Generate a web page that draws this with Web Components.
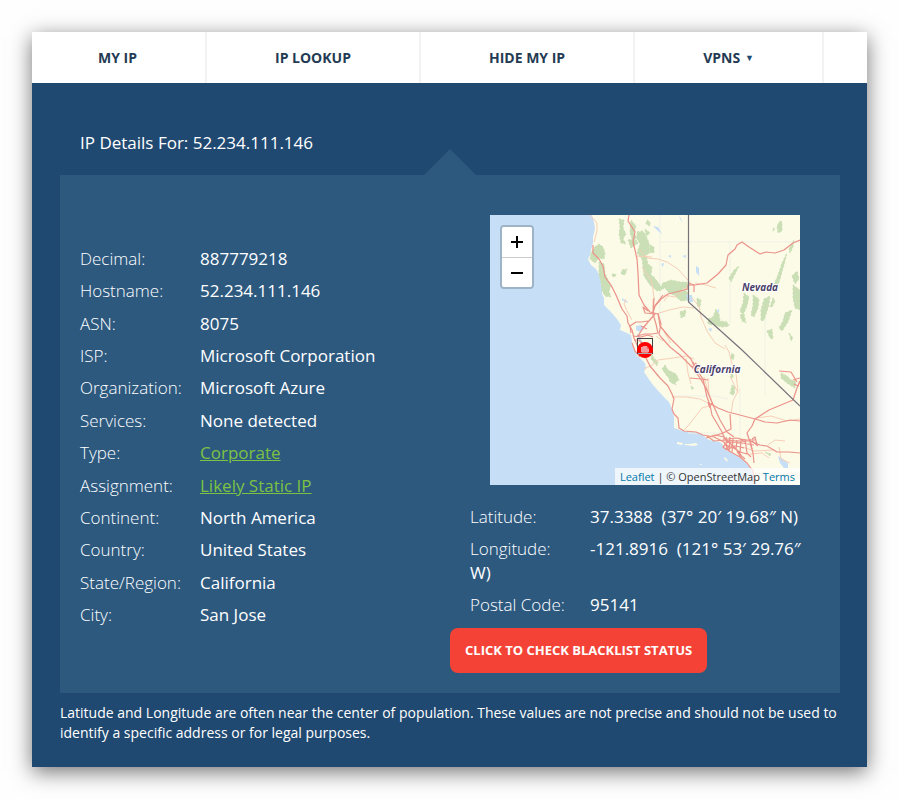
<!DOCTYPE html>
<html lang="en">
<head>
<meta charset="utf-8">
<title>IP Details For: 52.234.111.146</title>
<style>
  body { margin: 0; padding: 32px; background: #fefefe; font-family: "Open Sans", "Noto Sans", sans-serif; }
  a { color: #7cc243; }
</style>
</head>
<body>
<page-card>
  <nav-bar slot="nav">
    <nav-item href="#my-ip">MY IP</nav-item>
    <nav-item href="#lookup">IP LOOKUP</nav-item>
    <nav-item href="#hide">HIDE MY IP</nav-item>
    <nav-item href="#vpns" menu>VPNS</nav-item>
  </nav-bar>
  <ip-panel heading="IP Details For: 52.234.111.146">
    <detail-list slot="details">
      <detail-row label="Decimal:">887779218</detail-row>
      <detail-row label="Hostname:">52.234.111.146</detail-row>
      <detail-row label="ASN:">8075</detail-row>
      <detail-row label="ISP:">Microsoft Corporation</detail-row>
      <detail-row label="Organization:">Microsoft Azure</detail-row>
      <detail-row label="Services:">None detected</detail-row>
      <detail-row label="Type:"><a href="#corporate">Corporate</a></detail-row>
      <detail-row label="Assignment:"><a href="#static">Likely Static IP</a></detail-row>
      <detail-row label="Continent:">North America</detail-row>
      <detail-row label="Country:">United States</detail-row>
      <detail-row label="State/Region:">California</detail-row>
      <detail-row label="City:">San Jose</detail-row>
    </detail-list>
    <geo-map slot="location"></geo-map>
    <detail-list slot="location">
      <detail-row label="Latitude:">37.3388 &nbsp;(37° 20′ 19.68″ N)</detail-row>
      <detail-row label="Longitude:">-121.8916 &nbsp;(121° 53′ 29.76″ W)</detail-row>
      <detail-row label="Postal Code:">95141</detail-row>
    </detail-list>
    <action-button slot="location">CLICK TO CHECK BLACKLIST STATUS</action-button>
  </ip-panel>
  <foot-note>Latitude and Longitude are often near the center of population. These values are not precise and should not be used to identify a specific address or for legal purposes.</foot-note>
</page-card>

<script>
const define = (name, html, setup) => {
  const template = document.createElement('template');
  template.innerHTML = html;
  customElements.define(name, class extends HTMLElement {
    constructor() {
      super();
      this.attachShadow({ mode: 'open' }).append(template.content.cloneNode(true));
    }
    connectedCallback() { if (setup) setup(this, this.shadowRoot); }
  });
};

define('page-card', `
  <style>
    :host { display: block; background: #1f4971; color: #fff; box-shadow: 0 5px 20px rgba(0,0,0,.55); }
    main { padding: 0 27px 24px 28px; }
  </style>
  <slot name="nav"></slot>
  <main><slot></slot></main>`);

define('nav-bar', `
  <style>
    :host { display: block; background: #fff; overflow: hidden; }
    nav { display: flex; }
  </style>
  <nav><slot></slot></nav>`);

define('nav-item', `
  <style>
    :host { display: block; border-right: 2px solid #f2f2f2; }
    a { display: flex; gap: 5px; padding: 0 68px; font-size: 14px; font-weight: 700; line-height: 51px; color: #243b53; text-decoration: none; white-space: nowrap; }
    :host(:first-child) a { padding-left: 66px; }
    span { font-size: 9px; color: #1f4971; }
    [hidden] { display: none; }
  </style>
  <a><slot></slot><span hidden>▼</span></a>`, (host, root) => {
  root.querySelector('a').href = host.getAttribute('href');
  root.querySelector('span').hidden = !host.hasAttribute('menu');
});

define('ip-panel', `
  <style>
    :host { display: block; }
    h1 { margin: 0; padding: 48px 20px 20px; font-size: 17px; line-height: 24px; font-weight: 400; }
    .panel { position: relative; display: grid; grid-template-columns: 1fr 1fr; background: #2d597f; padding: 40px 0 20px; }
    .panel::before { content: ""; position: absolute; bottom: 100%; left: 50%; width: 52px; height: 26px; margin-left: -26px; background: inherit; clip-path: polygon(50% 0, 100% 100%, 0 100%); }
    .details { display: grid; padding: 32px 0 46px; }
  </style>
  <h1></h1>
  <div class="panel">
    <div class="details"><slot name="details"></slot></div>
    <div><slot name="location"></slot></div>
  </div>`, (host, root) => {
  root.querySelector('h1').textContent = host.getAttribute('heading');
});

define('detail-list', `
  <style>
    :host { display: grid; align-content: space-between; row-gap: 8px; padding: 0 20px; }
  </style>
  <slot></slot>`);

define('detail-row', `
  <style>
    :host { display: block; font-size: 17px; line-height: 24px; font-weight: 500; }
    b { display: inline-block; width: 120px; font-weight: 300; }
  </style>
  <b></b><slot></slot>`, (host, root) => {
  root.querySelector('b').textContent = host.getAttribute('label');
});

define('action-button', `
  <style>
    :host { display: block; margin-top: 11px; }
    button { border: 0; border-radius: 8px; padding: 12px 15px; background: #f44336; color: #fff; font: 700 13px/21px "Open Sans", sans-serif; cursor: pointer; white-space: nowrap; }
  </style>
  <button type="button"><slot></slot></button>`);

define('foot-note', `
  <style>
    :host { display: block; padding-top: 10px; font-size: 14px; line-height: 20px; }
    p { margin: 0; }
  </style>
  <p><slot></slot></p>`);

define('geo-map', `
  <style>
    :host { display: block; position: relative; margin: 0 40px 20px; background: #c6dff6; }
    svg { display: block; width: 100%; }
    .land { fill: #fcfbe7; }
    .water { fill: #c6dff6; }
    .wood { fill: #cbdfb6; stroke: #cbdfb6; stroke-width: 1; stroke-dasharray: 2 2; }
    .major { fill: none; stroke: #eb928a; stroke-width: 1.2; stroke-linejoin: round; }
    .minor { fill: none; stroke: #f7cfb8; stroke-width: 1; stroke-linejoin: round; }
    .border { fill: none; stroke: #77717c; stroke-width: 1.2; }
    .grid { fill: none; stroke: #eff1e5; stroke-width: 1; }
    text { font: italic 700 10px "Open Sans", sans-serif; fill: #4c4169; stroke: #fff; stroke-width: 2; paint-order: stroke; text-anchor: middle; }
    .zoom { position: absolute; top: 10px; left: 10px; display: grid; border: 2px solid #9fb3c7; border-radius: 4px; overflow: hidden; }
    button { display: grid; place-items: center; width: 30px; height: 30px; padding: 0; border: 0; background: #fff; }
    button + button { border-top: 1px solid #ccc; }
    .zoom svg { width: 14px; stroke: #000; stroke-width: 2; fill: none; }
    footer { position: absolute; right: 0; bottom: 0; padding: 0 5px; background: rgba(255,255,255,.7); color: #333; font-size: 11px; line-height: 17px; white-space: nowrap; }
    footer a { color: #0078a8; text-decoration: none; }
  </style>
  <svg viewBox="0 0 310 270" role="img" aria-label="Map of California and Nevada">
    <path class="land" d="M102 0L104 7 105 14 103 22 103 28 101 35 100 40 98 44 101 50 106 54 110 61 112 71 112 79 114 83 114 90 121 97 127 104 131 110 130 115 137 118 141 120 142 126 143 132 147 141 150 143 155 148 156 153 154 157 158 163 163 170 172 180 179 187 182 194 184 202 184 213 193 216 205 217 213 220 217 224 223 226 230 227 234 231 236 235 242 238 249 242 254 246 259 251 262 257 264 263 265 270H310V0Z"/>
    <g class="grid"><path d="M170 0V110M240 26V110M169 27H310M184 181L225 181 238 184M275 90V180M250 173V240M198 218H230"/></g>
    <g class="wood">
      <path d="M105 32l4-3 4 3 2 6-1 6-5-1-4 5-5-4 1-6zM109 47l5 2 1 9 3 7 3 6-2 5 2 6-6-1-3-5-1-9-2-7z"/>
      <path d="M129 4l5 1-1 8 3 6-3 5 3 5-5-1-2-9 1-7zM141 5l5 6-2 8 3 3-4 4-3-8zM138 25l7-1 3 4-7 5zM147 17l6-1 4 7 2 5 1 10-4 2 2 9 4 3-1 8 5 5 4 5 2 5-5 1-7-6-6-9-1-8-1-9-5-6 3-9-3-5z"/>
      <path d="M173 68l8-3 9 2 7 0 2 6-7 1 3 5-9 2-7-3-4-5-6 2zM190 75l7 1 2 9-8 1-6-5 2-4zM207 83l4 2-1 7-3-1zM190 97l6-2-1 6-4 2zM218 104l5-2 3-8 3 5 1 7 7 1 2 4-7 1-8-2-6-1z"/>
      <path d="M132 55l5-1-2 6-4-1zM122 59l4 0-1 3-3-1zM157 5l3 2 0 4-4-2zM155 14l5 4-4 3zM160 30l4 2 0 6-4-1zM159 60l5 2 4 6-3 4-5-4z"/>
      <path d="M239 63l5-8 5-4-4 8-4 8zM254 78l5 4-2 9-4 9-3-4 3-8zM263 80l6 4-1 9-4 9-3-2 2-10zM274 84l6-3-1 9-5 15-3 1 0-11zM283 83l2 3-3 6-2 0zM292 48l5-10-3 12-4 14-4 13-3-5 5-12zM299 34l5-9-1 7-3 6zM303 70l7 5v20l-5-2-2-10zM295 98l7-3-4 12-6 9-3-3 4-7zM290 6l2 1 0 9-4 2-1-7zM283 13l2 1-2 2zM250 100l4-1 2 9-4-2zM277 116l5-2 1 10-3-1zM299 118l4 5-2 3zM302 61l5-5 2 8-4 5z"/>
      <path d="M175 150l3 5 8 4 3 6-3 2-9-6-5-7zM178 161l7 5 1 4-6-3zM162 137l1 5 5 5-1 4-6-7zM242 170l3 2-1 8-4-1zM241 157l2-2 0 8-2 0zM210 153l4 1-2 3zM291 158l6 3 4 4 5 1-1 7-5-3-3-2-6-5zM241 139l3 0 0 5-3 0zM201 171l3 2-2 2zM275 237l6 2-1 2z"/>
    </g>
    <g class="water">
      <path d="M196 80l6 0 1 7-5 0zM206 51l3 2 0 8-3-4zM288 241l5 3 5 4 0 5-4 0-4-5zM132 83l6 4-1 1-5-3zM146 111l5-1 3 4-4 3-4-2zM148 118l3 6 4 8-4-3-4-8zM163 11l5 1 4 7-5-4zM189 0l4 8-3-4zM192 41l4-1 0 3zM218 114l4-1-1 4zM228 94l1 0 0 4-2-1zM171 49l3-1-1 4zM178 41l3-1 0 3z"/>
    </g>
    <g fill="#fcfbe7"><path d="M187 227l6 1-1 2-5-1zM194 229l5 0 7-1 2 2-5 1-8-1zM209 249l3 0-1 1zM234 242l3 2 1 3-4-3zM239 254l2 3-2-1z"/></g>
    <g class="minor">
      <path d="M150 35L157 43 168 44 177 47 188 54 197 64 202 70M100 0L107 8 107 16 104 27M147 41L162 42M152 52L162 67 164 83M174 80L185 82 200 70M202 83L209 91 211 102 217 116 225 128 235 134M205 68L216 70 226 73"/>
      <path d="M169 98L179 95 193 92 204 93M136 84L134 89 137 96 142 105M163 84L163 98M178 81L174 86"/>
      <path d="M154 154L162 150 168 145 183 143 196 141 204 144M182 182L197 182 210 184 222 190M196 143L198 158 201 169M218 163L219 180 223 190M222 190L212 193 198 211 193 216M223 190L218 176 214 162"/>
      <path d="M235 130L239 137 242 149 246 159 248 176 243 186 241 198M248 178L240 161M266 203L281 201 297 206 310 204M278 230L285 225 295 226M252 232L265 236 284 235M289 232L291 244 300 248M265 258L283 262 300 258 310 261M260 239L272 238 279 243M166 121L173 126M174 117L181 128"/>
    </g>
    <g class="major">
      <path d="M103 30L103 38 109 44 113 51 115 62 121 70 126 80 129 87 132 94 137 101 138 108 142 115 144 123 148 132 152 139 156 143 160 151 165 157 170 163 178 171 182 179 184 184 182 194 184 199 188 203 189 213 194 216 206 217 213 220 224 222 234 227 239 236 250 242 257 248 263 256 264 267"/>
      <path d="M139 0L138 6 145 17 143 27 145 35 147 44 148 58 149 80 154 90 160 97 168 99 171 109 169 119 171 122 180 132 190 140 202 152 210 163 216 173 224 192 230 205 237 217 244 222"/>
      <path d="M163 98L165 91 171 84 178 79 186 77 198 74 198 70 205 70 217 68 228 59 236 50 238 40 245 34 247 30 252 27 259 32 270 39 276 37 285 38 294 35 303 28 310 25"/>
      <path d="M164 83L163 99 166 109 168 118 162 119 155 119 147 121M198 68L204 70 204 77M173 80L164 92"/>
      <path d="M168 98L170 111 180 123 190 133 201 144 204 151 213 164 217 182 220 190 222 200 232 217 235 224"/>
      <path d="M148 121L153 113 158 107 165 99 155 98 153 92 158 96M143 121L151 122 158 120 163 122M141 118L140 111 146 107 151 107 158 106M151 111L157 114M144 125L149 125 155 132 150 134M142 128L145 136 150 142"/>
      <path d="M205 148L210 152 207 154 201 151M203 147L206 153M200 163L211 164 218 165M218 190L223 188M220 193L218 187M221 189L228 193 238 197 246 199 265 204 279 195 291 190 303 185 307 173 310 166M265 204L275 207 287 208 300 205 310 206"/>
      <path d="M265 204L262 211 257 218 260 227 263 238 264 248M240 199L241 214 233 218 224 221M217 221L224 226 235 225 247 226 260 226 270 230 277 231 287 237 299 237 310 238M289 156L301 157 307 167M303 165L310 163M304 169L308 171 310 166"/>
      <path d="M233 224L238 224 246 223 256 225 265 225M234 228L242 227 252 228 264 230M236 231L246 231 254 233M237 235L242 232 250 237 257 239M236 222L237 234M240 222L239 236M243 224L242 237M247 225L246 234 251 240M251 226L250 238M255 224L257 238 261 242M260 224L262 234M234 223L241 229 246 234 251 243M248 223L255 227M236 229L240 234M262 224L265 222 267 230M216 223L225 220 234 222M238 226L233 232 237 235M247 237L255 244M262 226L268 231"/>
    </g>
    <path class="border" d="M198.500 0V87L252 135 310 191"/>
    <text x="270" y="76">Nevada</text>
    <text x="227" y="158">California</text>
    <rect x="147.500" y="123.500" width="15" height="15" fill="none" stroke="#444"/>
    <circle cx="155" cy="135" r="6" fill="#f87168" stroke="#f00" stroke-width="4"/>
    <path d="M151 137v-5h2v-1h4v3h2v3z" fill="#f79aa0"/>
    <path d="M148 138.500H162" stroke="#aaa"/>
  </svg>
  <div class="zoom">
    <button type="button" aria-label="Zoom in"><svg viewBox="0 0 14 14"><path d="M1 7H13M7 1V13"/></svg></button>
    <button type="button" aria-label="Zoom out"><svg viewBox="0 0 14 14"><path d="M1 7H13"/></svg></button>
  </div>
  <footer><a href="#leaflet">Leaflet</a> | © OpenStreetMap <a href="#terms">Terms</a></footer>`);
</script>
</body>
</html>
